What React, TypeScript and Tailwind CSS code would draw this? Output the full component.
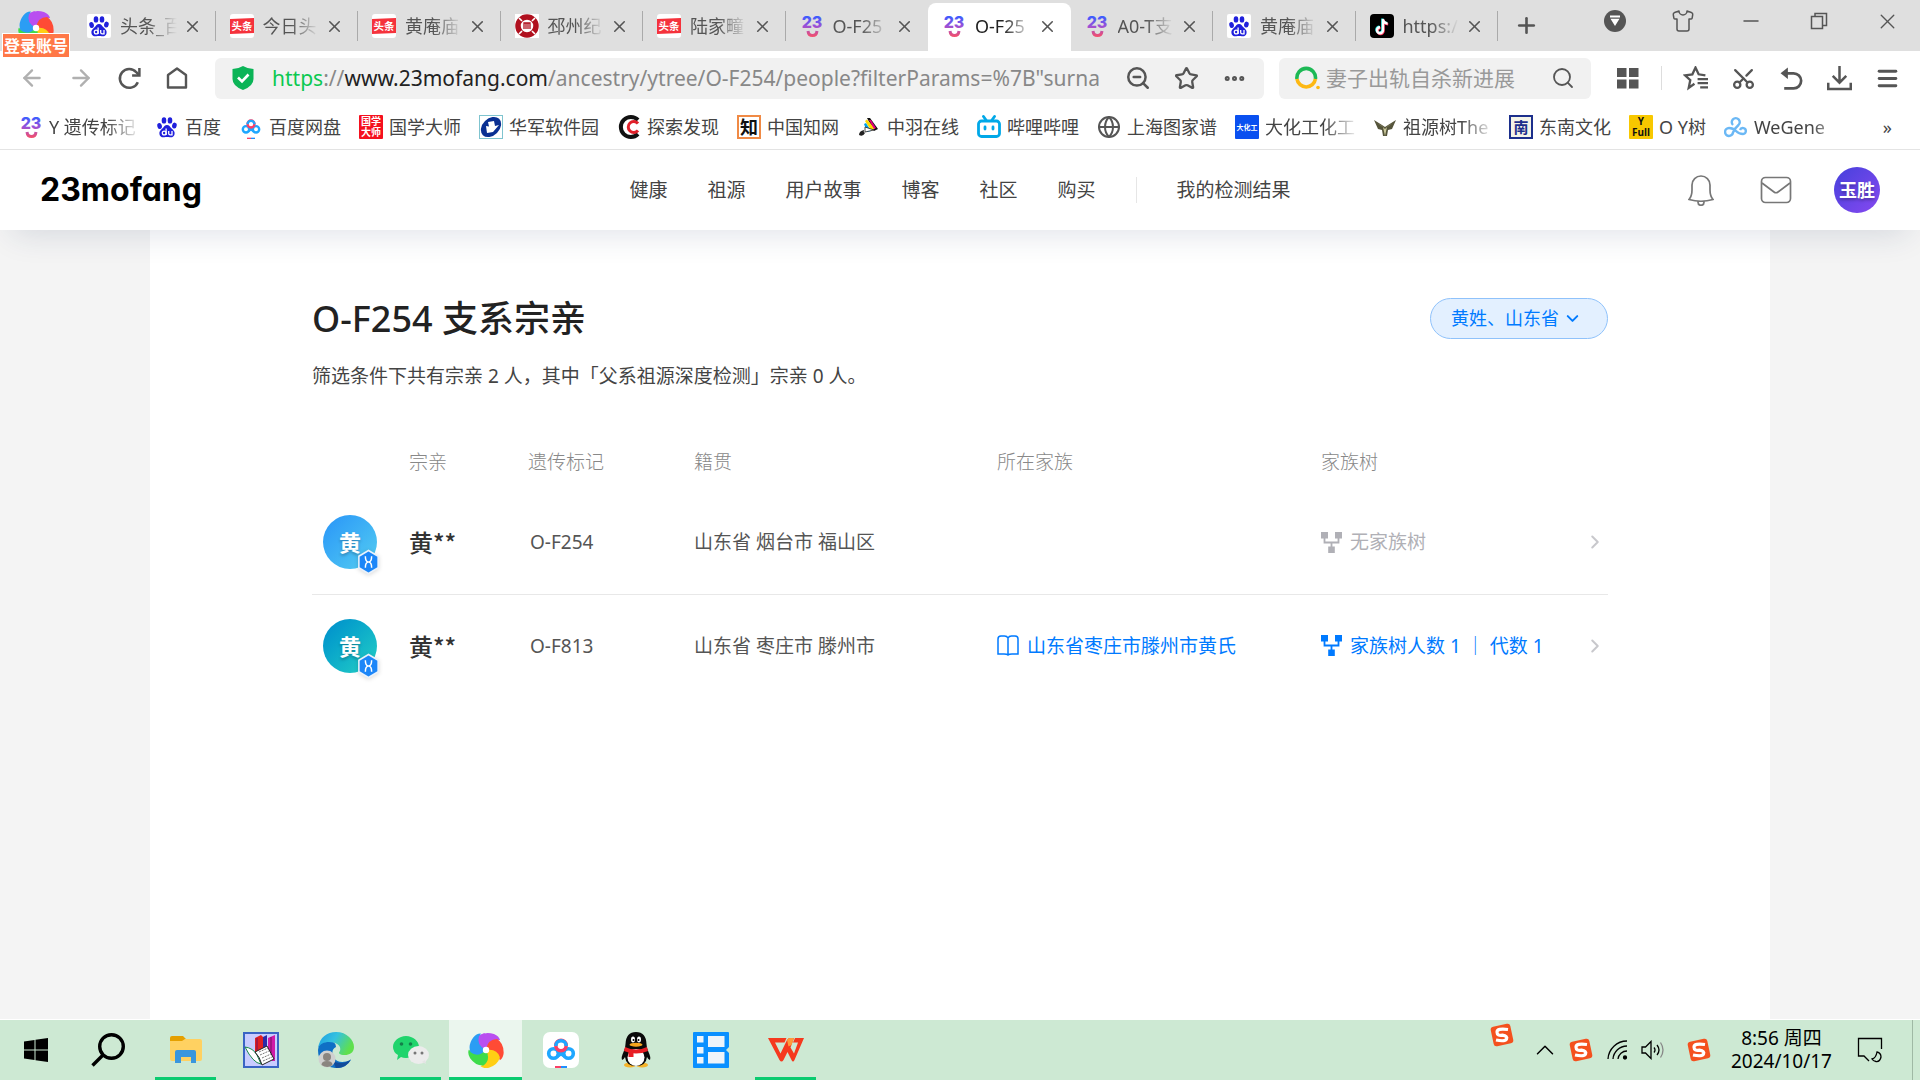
import type { ReactNode } from 'react';
import {
  ArrowLeft, ArrowRight, ChevronDown, ChevronRight, ChevronUp, Ellipsis, Globe, Menu, Minus, Plus,
  Scissors, Search, Shirt, Star, X, ZoomOut,
} from 'lucide-react';

/* ---------- site icons ---------- */

function Paw() {
  return (
    <svg viewBox="0 0 24 24" className="h-6 w-6 shrink-0">
      <rect width="24" height="24" rx="2" fill="#fff" />
      <g fill="#2020dc">
        <ellipse cx="4.6" cy="11" rx="2.3" ry="3" transform="rotate(-12 4.6 11)" />
        <ellipse cx="9" cy="5.4" rx="2.3" ry="3.2" />
        <ellipse cx="15" cy="5.4" rx="2.3" ry="3.2" />
        <ellipse cx="19.4" cy="10.6" rx="2.3" ry="3" transform="rotate(12 19.4 10.6)" />
        <path d="M12 10c2.2 0 3 1.8 4.400 3.300 1.700 1.700 3.600 3 3.200 5.600-.4 2.700-2.500 3.600-4.800 3.300-2-.3-3.600-.3-5.600 0-2.300.3-4.400-.6-4.800-3.300-.4-2.600 1.500-3.900 3.200-5.600C9 11.800 9.800 10 12 10z" />
      </g>
      <g fill="none" stroke="#fff" strokeWidth="1.300">
        <circle cx="9.200" cy="18" r="1.900" />
        <path d="M11.100 13.500V20M13.700 16v2.500q0 1.400 1.500 1.400h1.800V16" />
      </g>
    </svg>
  );
}

function Toutiao() {
  return (
    <svg viewBox="0 0 24 24" className="h-6 w-6 shrink-0">
      <rect width="24" height="24" rx="3" fill="#fff" />
      <path d="M0 5l24-1v15L0 20z" fill="#f5323c" />
      <text x="12" y="16" fontSize="10.500" fontWeight="700" fill="#fff" textAnchor="middle" fontFamily="Noto Sans CJK SC">头条</text>
    </svg>
  );
}

function Mofang() {
  return (
    <svg viewBox="0 0 24 24" className="h-6 w-6 shrink-0">
      <defs>
        <linearGradient id="mofang" x1="0" y1="0" x2="0" y2="24" gradientUnits="userSpaceOnUse">
          <stop offset="0.100" stopColor="#3b5cff" />
          <stop offset="0.500" stopColor="#9a50d8" />
          <stop offset="1" stopColor="#ff4f5e" />
        </linearGradient>
      </defs>
      <text x="12" y="14" fontSize="16" fontWeight="800" fill="url(#mofang)" textAnchor="middle" fontFamily="Inter">23</text>
      <path d="M8 17Q8.500 21.500 12.500 21.500T17 17" fill="none" stroke="url(#mofang)" strokeWidth="3" />
    </svg>
  );
}

function RedSeal() {
  return (
    <svg viewBox="0 0 24 24" className="h-6 w-6 shrink-0">
      <rect width="24" height="24" fill="#fff" />
      <circle cx="12" cy="12" r="9" fill="none" stroke="#b0101e" strokeWidth="5.500" />
      <path d="M4 4l3 3M20 4l-3 3M4 20l3-3M20 20l-3-3" stroke="#fff" strokeWidth="1.600" />
      <path d="M9 15V9h6v6M11 9v6M13 9v6" stroke="#b0101e" strokeWidth="1.300" fill="none" />
    </svg>
  );
}

function Tiktok() {
  return (
    <svg viewBox="0 0 24 24" className="h-6 w-6 shrink-0">
      <rect width="24" height="24" rx="4" fill="#000" />
      <g fill="none" strokeWidth="2.400">
        <path d="M12.400 4.500v11.300a3 3 0 1 1-3-3M12.400 5c.4 2.600 2 3.800 4.600 4" stroke="#25f4ee" />
        <path d="M13.600 5.700V17a3 3 0 1 1-3-3M13.600 6.200c.4 2.600 2 3.800 4.600 4" stroke="#fe2c55" />
        <path d="M13 5v11.300a3 3 0 1 1-3-3M13 5.500c.4 2.600 2 3.800 4.600 4" stroke="#fff" />
      </g>
    </svg>
  );
}

function NetDisk({ size = 'h-6 w-6' }: { size?: string }) {
  return (
    <svg viewBox="0 0 36 36" className={`${size} shrink-0`}>
      <rect width="36" height="36" rx="7" fill="#fff" />
      <g fill="none" strokeWidth="3.600">
        <circle cx="10.500" cy="21.500" r="4.800" stroke="#1ea7ff" />
        <circle cx="25.500" cy="21.500" r="4.800" stroke="#1ea7ff" />
        <path d="M14 24.500L22 18.500M22 24.500L14 18.500" stroke="#1ea7ff" />
        <circle cx="18" cy="13.500" r="5.200" stroke="#fb3f66" />
        <path d="M12.800 14a5.200 5.200 0 0 1 10.400 0" stroke="#1ea7ff" />
      </g>
      <path d="M12 34h6v2h-6z" fill="#fb3f66" />
      <path d="M18 34h6v2h-6z" fill="#1e8fff" />
    </svg>
  );
}

function Tile({ bg, color, stroke, lines, size }: { bg: string; color: string; stroke?: string; lines: string[]; size: number }) {
  return (
    <svg viewBox="0 0 24 24" className="h-6 w-6 shrink-0">
      <rect width="24" height="24" rx={stroke ? 0 : 1} fill={bg} />
      {stroke && <rect x="1" y="1" width="22" height="22" fill="none" stroke={stroke} strokeWidth="2" />}
      {lines.map((line, i) => (
        <text
          key={line}
          x="12"
          y={lines.length === 1 ? 12 + size * 0.38 : 10 + i * 11}
          fontSize={size}
          fontWeight="700"
          fill={color}
          textAnchor="middle"
          fontFamily="Noto Sans, Noto Sans CJK SC"
        >
          {line}
        </text>
      ))}
    </svg>
  );
}

function Huajun() {
  return (
    <svg viewBox="0 0 24 24" className="h-6 w-6 shrink-0">
      <rect x="0.500" y="0.500" width="23" height="23" fill="#fff" stroke="#7fc4cf" />
      <ellipse cx="12" cy="12" rx="11.500" ry="8.500" transform="rotate(-45 12 12)" fill="#0a2f92" />
      <path d="M9 7l6-1 1 5 4-1-6 7-6 1-1-7 3 .5z" fill="#fff" />
    </svg>
  );
}

function Discover() {
  return (
    <svg viewBox="0 0 24 24" className="h-6 w-6 shrink-0">
      <path d="M21 5A10 10 0 1 0 21 19" fill="none" stroke="#111" strokeWidth="4" />
      <path d="M21 8.500A5.500 5.500 0 1 0 21 15.500" fill="none" stroke="#e0202a" strokeWidth="3" />
    </svg>
  );
}

function Feather() {
  return (
    <svg viewBox="0 0 24 24" className="h-6 w-6 shrink-0">
      <path d="M10 3l3 0 8 11-4 2z" fill="#111" />
      <path d="M8 6l2-1.500 8 9-4 2z" fill="#ffd800" />
      <path d="M12 5l2 0 5 8-2 1z" fill="#e6007e" />
      <path d="M7 9l2-1 5 8-4 1z" fill="#00a0e9" />
      <path d="M8 12l9 3-9 2z" fill="#fff" stroke="#222" strokeWidth="0.800" />
      <path d="M2 20q0-4 5-5-1 2 1 3-2 4-6 2z" fill="#222" />
    </svg>
  );
}

function Bilibili() {
  return (
    <svg viewBox="0 0 24 24" className="h-6 w-6 shrink-0" fill="none" stroke="#00a8e8" strokeWidth="2.800" strokeLinecap="round">
      <rect x="1.500" y="6" width="21" height="15.500" rx="3" />
      <path d="M6.500 1.500L9 5M17.500 1.500L15 5M8 12v2M16 12v2" />
    </svg>
  );
}

function Owl() {
  return (
    <svg viewBox="0 0 24 24" className="h-6 w-6 shrink-0">
      <path d="M1 5l8 5 3 2 3-2 8-5-4 9-4 1-1 6h-4l-1-6-4-1z" fill="#55543a" />
      <path d="M4 8l6 4 2 9 2-9 6-4-5 3-3 3-3-3z" fill="#c9c79a" />
    </svg>
  );
}

function WeGene() {
  return (
    <svg viewBox="0 0 24 24" className="h-6 w-6 shrink-0" fill="none" stroke="#6bb8f5" strokeWidth="2.400">
      <path d="M9 10a4 4 0 1 1 5.500 0Q11 13 9 17.500A4 4 0 1 1 5 13q4 0 7 3t7 3a3 3 0 1 0-3-4" />
    </svg>
  );
}

function Pinwheel({ size }: { size: string }) {
  const petals = ['#b94ff0', '#ff4b35', '#ffcf14', '#3ddc4a', '#2b9df4'];
  return (
    <svg viewBox="0 0 36 36" className={`${size} shrink-0`}>
      {petals.map((fill, i) => (
        <path key={fill} d="M18 18Q8 13 11 4Q17 -1 26 2Q31 4 32 8Q21 7 18 18z" fill={fill} transform={`rotate(${i * 72} 18 18)`} />
      ))}
      {/* the first petal has to tuck over the last one again */}
      <path d="M18 18Q8 13 11 4Q13 2 17 1Q12 9 18 18z" fill="#b94ff0" />
      <circle cx="18" cy="18" r="3.200" fill="#fff" />
    </svg>
  );
}

/* ---------- browser chrome ---------- */

const tabs = [
  { icon: <Paw />, title: '头条_百' },
  { icon: <Toutiao />, title: '今日头' },
  { icon: <Toutiao />, title: '黄庵庙' },
  { icon: <RedSeal />, title: '邳州纪' },
  { icon: <Toutiao />, title: '陆家疃' },
  { icon: <Mofang />, title: 'O-F25', noLine: true },
  { icon: <Mofang />, title: 'O-F25', active: true },
  { icon: <Mofang />, title: 'A0-T支' },
  { icon: <Paw />, title: '黄庵庙' },
  { icon: <Tiktok />, title: 'https:/' },
];

const bookmarks: { icon: ReactNode; title: string; fade?: boolean }[] = [
  { icon: <Mofang />, title: 'Y 遗传标记', fade: true },
  { icon: <Paw />, title: '百度' },
  { icon: <NetDisk />, title: '百度网盘' },
  { icon: <Tile bg="#f5101e" color="#fff" lines={['国学', '大师']} size={10} />, title: '国学大师' },
  { icon: <Huajun />, title: '华军软件园' },
  { icon: <Discover />, title: '探索发现' },
  { icon: <Tile bg="#fff" color="#111" stroke="#f08a45" lines={['知']} size={18} />, title: '中国知网' },
  { icon: <Feather />, title: '中羽在线' },
  { icon: <Bilibili />, title: '哔哩哔哩' },
  { icon: <Globe className="h-6 w-6 shrink-0 text-[#555]" strokeWidth={2} />, title: '上海图家谱' },
  { icon: <Tile bg="#0a50f0" color="#fff" lines={['大化工']} size={7} />, title: '大化工化工', fade: true },
  { icon: <Owl />, title: '祖源树The', fade: true },
  { icon: <Tile bg="#f4f4e8" color="#1c2f8c" stroke="#1c2f8c" lines={['南']} size={15} />, title: '东南文化' },
  { icon: <Tile bg="#f8c800" color="#111" lines={['Y', 'Full']} size={10} />, title: 'O Y树' },
  { icon: <WeGene />, title: 'WeGene', fade: true },
];

function TabStrip() {
  return (
    <div className="relative flex h-[51px] shrink-0 bg-[#dfdfdf] text-[#555]">
      <button aria-label="登录账号" className="relative w-[73px] shrink-0">
        <span className="absolute top-[10px] left-[18px]"><Pinwheel size="h-9 w-9" /></span>
        <span className="absolute top-[33px] left-[2px] z-20 flex h-[25px] w-[68px] items-center justify-center border border-white bg-[#ff7847] text-[16px] font-bold text-white">
          登录账号
        </span>
      </button>
      <div className="flex min-w-0 flex-1">
        {tabs.map((tab, i) => (
          <div key={i} className={`relative mt-[3px] flex min-w-0 flex-1 items-center pr-[14px] pb-[2px] pl-[14px] ${tab.active ? 'rounded-t-lg bg-white text-[#222]' : ''}`}>
            {tab.icon}
            <button className="ml-[9px] min-w-0 flex-1 text-left text-[18px] leading-6 whitespace-nowrap [mask-image:linear-gradient(to_right,#000_50%,transparent_100%)]">
              {tab.title}
            </button>
            <button aria-label="关闭标签页" className="ml-[6px] shrink-0"><X size={19} strokeWidth={2} className="text-[#555]" /></button>
            {!tab.active && !tab.noLine && <span className="absolute top-[8px] right-0 h-[30px] w-px bg-[#aaa]" />}
          </div>
        ))}
      </div>
      <div className="flex w-[422px] shrink-0 justify-between pr-[20px] pl-[16px]">
        <button aria-label="新建标签页"><Plus size={25} strokeWidth={2.500} /></button>
        <div className="flex h-[42px] items-center gap-[44px]">
          <button aria-label="缓存">
            <svg width="24" height="24" viewBox="0 0 24 24"><circle cx="12" cy="12" r="11" fill="#555" /><path d="M7 6.500h10v2H7zM7.500 9.800h9L12 17z" fill="#fff" /></svg>
          </button>
          <button aria-label="皮肤"><Shirt size={24} strokeWidth={1.500} /></button>
          <button aria-label="最小化"><Minus size={24} strokeWidth={1.500} /></button>
          <button aria-label="还原" className="px-[3px]">
            <svg width="18" height="18" viewBox="0 0 18 18" fill="none" stroke="#555" strokeWidth="1.500"><path d="M1.500 4.500h11v12h-11zM5 4.500v-3h11.500v12h-4" /></svg>
          </button>
          <button aria-label="关闭"><X size={25} strokeWidth={1.300} /></button>
        </div>
      </div>
    </div>
  );
}

function AddressRow() {
  return (
    <div className="flex h-[54px] shrink-0 items-center bg-white pr-[20px] pl-[19px] text-[#555]">
      <div className="flex gap-[23px]">
        <button aria-label="后退" className="text-[#b0b0b0]"><ArrowLeft size={26} strokeWidth={2.200} /></button>
        <button aria-label="前进" className="text-[#b0b0b0]"><ArrowRight size={26} strokeWidth={2.200} /></button>
        <button aria-label="刷新">
          <svg width="25" height="25" viewBox="0 0 24 24" fill="none" stroke="#555" strokeWidth="2.400"><path d="M20 15.500A9 9 0 1 1 18.500 6L21 8.500" /><path d="M14.500 9H21.500V2" /></svg>
        </button>
        <button aria-label="主页">
          <svg width="24" height="24" viewBox="0 0 24 24" fill="none" stroke="#555" strokeWidth="2.400" strokeLinejoin="round"><path d="M3 9L12 2.500l9 6.500V21.500H3z" /></svg>
        </button>
      </div>
      <div className="ml-[26px] flex h-[41px] min-w-0 flex-1 items-center rounded-md bg-[#f1f1f1] pr-[17px] pl-[16px]">
        <svg width="24" height="24" viewBox="0 0 24 24" className="shrink-0"><path d="M12 0q5 3 10.500 3v10q0 7-10.500 11Q1.500 20 1.500 13V3Q7 3 12 0z" fill="#0bb457" /><path d="M7 11.500l4 4 6.500-7" fill="none" stroke="#fff" strokeWidth="2.600" /></svg>
        <div className="relative ml-[17px] min-w-0 flex-1 overflow-hidden text-[21px] leading-8 whitespace-nowrap text-[#888]">
          <span className="text-[#0bc950]">https</span>://<span className="text-[#222]">www.23mofang.com</span>/ancestry/ytree/O-F254/people?filterParams=%7B"surna
          <input aria-label="地址" className="absolute inset-0 w-full bg-transparent outline-none" />
        </div>
        <div className="ml-[15px] flex shrink-0 gap-[23px]">
          <button aria-label="缩放"><ZoomOut size={26} strokeWidth={2.300} /></button>
          <button aria-label="收藏"><Star size={25} strokeWidth={2.200} /></button>
          <button aria-label="更多"><Ellipsis size={25} strokeWidth={2.800} /></button>
        </div>
      </div>
      <div className="ml-[15px] flex h-[41px] w-[312px] shrink-0 items-center rounded-md bg-[#f1f1f1] pr-[16px] pl-[16px]">
        <svg width="25" height="24" viewBox="0 0 25 24" className="shrink-0" fill="none" strokeWidth="3.600"><path d="M2 13A9.300 9.300 0 1 1 20.400 13" stroke="#1db955" /><path d="M2 13A9.300 9.300 0 0 0 20.400 13" stroke="#fdb813" /><circle cx="23" cy="21.500" r="1.800" fill="#fdb813" stroke="none" /></svg>
        <input aria-label="搜索" placeholder="妻子出轨自杀新进展" className="ml-[6px] min-w-0 flex-1 bg-transparent text-[21px] leading-8 outline-none placeholder:text-[#999]" />
        <button aria-label="搜索" className="ml-2"><Search size={24} strokeWidth={1.800} /></button>
      </div>
      <button aria-label="扩展" className="ml-[25px]">
        <svg width="24" height="24" viewBox="0 0 24 24" fill="#555"><path d="M1 2h9.500v9H1zM13 2h9.500v9H13zM1 13.500h9.500v9H1zM13 13.500h9.500v9H13z" /></svg>
      </button>
      <span className="mx-[21px] h-6 w-px bg-[#ddd]" />
      <div className="flex shrink-0 gap-[23px]">
        <button aria-label="收藏夹">
          <svg width="25" height="25" viewBox="0 0 24 24" fill="none" stroke="#555" strokeWidth="2.200"><path d="M11 17l-5.500 4 1.500-7.500L2 9l7-1 3-6.500L15 8l6.500 1M14 12.500h10M14 16.500h10M16.500 20.500H24" /></svg>
        </button>
        <button aria-label="截图"><Scissors size={25} strokeWidth={2.200} className="-rotate-90" /></button>
        <button aria-label="恢复">
          <svg width="25" height="25" viewBox="0 0 24 24" fill="none" stroke="#555" strokeWidth="2.600"><path d="M4 7h10a7 7 0 0 1 0 14.500H5" /><path d="M8.500 1.500v11L1.500 7z" fill="#555" stroke="none" /></svg>
        </button>
        <button aria-label="下载">
          <svg width="25" height="25" viewBox="0 0 24 24" fill="none" stroke="#555" strokeWidth="2.400"><path d="M12 0v15M5.500 9.500L12 16l6.500-6.500M1.200 16v6h21.600v-6" /></svg>
        </button>
        <button aria-label="菜单"><Menu size={25} strokeWidth={2.800} /></button>
      </div>
    </div>
  );
}

function BookmarkBar() {
  return (
    <div className="flex h-[45px] shrink-0 items-center gap-[18px] border-b border-[#e4e4e4] bg-white pr-[28px] pl-[19px] text-[18px] leading-6 text-[#444]">
      {bookmarks.map(({ icon, title, fade }) => (
        <a key={title} href="#" className="flex shrink-0 items-center gap-[6px]">
          {icon}
          <span className={`whitespace-nowrap ${fade ? 'min-w-[88px] [mask-image:linear-gradient(to_right,#000_65%,transparent_105%)]' : ''}`}>
            {title}
          </span>
        </a>
      ))}
      <button aria-label="更多书签" className="ml-auto">»</button>
    </div>
  );
}

/* ---------- page ---------- */

function SiteHeader() {
  const links = ['健康', '祖源', '用户故事', '博客', '社区', '购买'];
  return (
    <header className="relative z-10 grid h-20 shrink-0 grid-cols-[1fr_auto_1fr] items-center bg-white px-10 shadow-[0_16px_32px_-12px_rgba(30,50,90,0.14)]">
      <a href="#" className="font-['Inter',sans-serif] text-[32px] leading-10 font-bold text-black [font-feature-settings:'cv11']">23mofang</a>
      <nav className="flex items-center gap-10 text-[19px] leading-7 text-[#444]">
        {links.map((link) => <a key={link} href="#">{link}</a>)}
        <span className="h-[26px] w-px bg-[#e6e6e6]" />
        <a href="#">我的检测结果</a>
      </nav>
      <div className="flex items-center justify-end">
        <button aria-label="通知">
          <svg width="26" height="32" viewBox="0 0 26 32" fill="none" stroke="#777" strokeWidth="1.700"><path d="M1 25.500Q4 22 4 16V11a9 9 0 0 1 18 0v5q0 6 3 9.500Q13 29 1 25.500zM10 27.500v.8a3 3 0 0 0 6 0v-.8" /></svg>
        </button>
        <button aria-label="消息" className="ml-[46px]">
          <svg width="32" height="28" viewBox="0 0 32 28" fill="none" stroke="#777" strokeWidth="1.700"><rect x="1.500" y="1.500" width="29" height="25" rx="4" /><path d="M2 7l12 9q2 1.500 4 0L30 7" /></svg>
        </button>
        <button className="ml-[42px] h-[46px] w-[46px] rounded-full bg-linear-135 from-[#4440dc] to-[#8648f0] text-[18px] font-bold whitespace-nowrap text-white [text-shadow:0_2px_3px_rgba(0,0,0,0.3)]">
          玉胜
        </button>
      </div>
    </header>
  );
}

const people = [
  { avatar: 'from-[#2a94f8] to-[#55cdf0]', marker: 'O-F254', origin: '山东省 烟台市 福山区', clan: '', tree: '' },
  { avatar: 'from-[#038ccc] to-[#25d0c4]', marker: 'O-F813', origin: '山东省 枣庄市 滕州市', clan: '山东省枣庄市滕州市黄氏', tree: '家族树人数 1 ｜ 代数 1' },
];

function TreeIcon() {
  return (
    <svg width="21" height="21" viewBox="0 0 21 21" className="shrink-0" fill="currentColor">
      <path d="M0 0h7v6.500H0zM14 0h7v6.500h-7zM7.200 14.500h6.600V21H7.200z" />
      <path d="M3.500 6v4.500h14V6M10.500 10.500V15" fill="none" stroke="currentColor" strokeWidth="1.800" />
    </svg>
  );
}

function Badge() {
  return (
    <svg viewBox="0 0 22 25" className="absolute -right-[3px] -bottom-[6px] h-[26px] w-[23px] drop-shadow-sm">
      <path d="M11 .5l10 6v12l-10 6-10-6v-12z" fill="#eaf2fb" />
      <path d="M11 2.500l8.500 5v10L11 22.500l-8.500-5v-10z" fill="#1c86f8" />
      <path d="M8 7q0 5 2.500 5.500Q8 13 8 18M14 7q0 5-2.500 5.500Q14 13 14 18M10 12.500h2" fill="none" stroke="#fff" strokeWidth="1.400" />
    </svg>
  );
}

function PeoplePage() {
  return (
    <main className="mx-auto w-full max-w-[1620px] flex-1 bg-white px-[162px] pt-[68px]">
      <div className="flex h-[41px] items-center justify-between">
        <h1 className="text-[36px] leading-10 font-medium text-[#222]">O-F254 支系宗亲</h1>
        <button className="flex h-[41px] items-center gap-1 rounded-full border border-[#8fc2fb] bg-[#e3f0ff] pr-[25px] pl-5 text-[18px] text-[#007aff]">
          黄姓、山东省
          <ChevronDown size={19} strokeWidth={2.500} />
        </button>
      </div>
      <p className="mt-[23px] text-[19px] leading-7 text-[#444]">筛选条件下共有宗亲 2 人，其中「父系祖源深度检测」宗亲 0 人。</p>
      <table className="mt-[43px] w-full table-fixed border-collapse text-left text-[19px] leading-7 text-[#555]">
        <colgroup>
          <col className="w-[97px]" />
          <col className="w-[119px]" />
          <col className="w-[166px]" />
          <col className="w-[303px]" />
          <col className="w-[324px]" />
          <col className="w-[259px]" />
          <col className="w-[28px]" />
        </colgroup>
        <thead>
          <tr className="h-[58px] text-[#888]">
            <td />
            {['宗亲', '遗传标记', '籍贯', '所在家族', '家族树'].map((h) => <th key={h} scope="col" className="font-light">{h}</th>)}
            <td />
          </tr>
        </thead>
        <tbody>
          {people.map((p) => (
            <tr key={p.marker} className="h-[103px] border-[#e8e8e8] not-last:border-b">
              <td className="pl-[11px]">
                <div className={`relative flex h-[54px] w-[54px] items-center justify-center rounded-full bg-linear-135 text-[22px] font-bold text-white [text-shadow:0_2px_3px_rgba(0,0,0,0.25)] ${p.avatar}`}>
                  黄
                  <Badge />
                </div>
              </td>
              <td className="font-['Noto_Sans_CJK_SC',sans-serif] text-[24px] font-medium text-[#333]">黄**</td>
              <td className="pl-[2px]">{p.marker}</td>
              <td className="whitespace-nowrap">{p.origin}</td>
              <td>
                {p.clan && (
                  <a href="#" className="flex items-center gap-2 whitespace-nowrap text-[#007aff]">
                    <svg width="22" height="21" viewBox="0 0 22 21" className="shrink-0" fill="none" stroke="currentColor" strokeWidth="1.500"><path d="M11 3Q10 1 7.500 1H4Q1 1 1 4V19h6q3 0 4 1 1-1 4-1h6V4q0-3-3-3h-3.500Q12 1 11 3zM11 3v17" /></svg>
                    {p.clan}
                  </a>
                )}
              </td>
              <td>
                <a href="#" className={`flex items-center gap-2 whitespace-nowrap ${p.tree ? 'text-[#007aff]' : 'text-[#b0b0b6]'}`}>
                  <TreeIcon />
                  {p.tree || '无家族树'}
                </a>
              </td>
              <td><ChevronRight size={22} strokeWidth={2.200} className="ml-[4px] text-[#c8c8cc]" /></td>
            </tr>
          ))}
        </tbody>
      </table>
    </main>
  );
}

/* ---------- taskbar ---------- */

function FolderIcon() {
  return (
    <svg width="32" height="28" viewBox="0 0 32 28">
      <path d="M0 2q0-2 2-2h11l3 3H30v6H0z" fill="#e5a000" />
      <path d="M0 5h12l3-2h15q2 0 2 2v18q0 2-2 2H2q-2 0-2-2z" fill="#ffd161" />
      <path d="M5 27V16q0-2 2-2h17q2 0 2 2v11h-5v-6H11v6z" fill="#3a96dd" />
    </svg>
  );
}

function BooksIcon() {
  return (
    <svg width="36" height="36" viewBox="0 0 36 36">
      <rect x="1" y="1" width="34" height="34" fill="#c9ccff" stroke="#3a64c4" strokeWidth="2" />
      <path d="M12 6l6-3 3 3v15h-9z" fill="#e02020" />
      <path d="M20 5l4-2v16h-4z" fill="#2a2aa8" />
      <path d="M25 6l7-3v26h-3l-4-9z" fill="#d01aa8" />
      <path d="M28 5v22M14 6v12" stroke="#701060" />
      <path d="M2 15q8 1 12 8l4 9q-8-1-16-17z" fill="#fff" stroke="#1a8a4a" />
      <path d="M12 20l12-6 7 13-12 6q-2-8-7-13z" fill="#fff" stroke="#222" />
      <path d="M16 20l9-4M17 23l9-4M19 26l9-4M20 29l9-4" stroke="#777" strokeDasharray="2 1" />
    </svg>
  );
}

function EdgeIcon() {
  return (
    <svg width="36" height="36" viewBox="0 0 36 36">
      <defs>
        <linearGradient id="edgeTop" x1="0" x2="1" y1="0" y2="0.400"><stop stopColor="#1b9de2" /><stop offset="0.500" stopColor="#35c1e0" /><stop offset="1" stopColor="#5fe04c" /></linearGradient>
      </defs>
      <path d="M0 18Q0 10 8 9q10-1 10 6-6 3-2 11 5 7 17 2-6 9-16 8Q0 34 0 18z" fill="#0f6fc5" />
      <path d="M0 16C2 5 9 0 18 0c11 0 18 8 18 15 0 6-5 8-9 8-6 0-7-2-5-4 2-6-5-9-11-9C6 10 2 12 0 16z" fill="url(#edgeTop)" />
      <path d="M12 23q3 9 12 8 6-1 9-4-4 9-15 9z" fill="#114a9a" />
      <circle cx="9" cy="27" r="8.500" fill="#d0d0d0" />
      <circle cx="9" cy="25" r="4" fill="#8a8580" />
      <path d="M3.500 33q0-4 5.500-4t5.500 4q-5 4-11 0z" fill="#8a8580" />
    </svg>
  );
}

function WechatIcon() {
  return (
    <svg width="36" height="30" viewBox="0 0 36 30">
      <path d="M13 1c7 0 13 5 13 11s-6 11-13 11q-3 0-5-1l-4 3 1-5Q0 17 0 12C0 6 6 1 13 1z" fill="#20d46c" />
      <ellipse cx="25.500" cy="20" rx="10.500" ry="9" fill="#ececec" />
      <path d="M29 27l4 2-1-4z" fill="#e4e4e4" />
      <g fill="#14804a"><circle cx="8.500" cy="9" r="1.800" /><circle cx="17.500" cy="9" r="1.800" /></g>
      <g fill="#777"><circle cx="22" cy="18" r="1.500" /><circle cx="29" cy="18" r="1.500" /></g>
    </svg>
  );
}

function QQIcon() {
  return (
    <svg width="30" height="36" viewBox="0 0 30 36">
      <ellipse cx="9" cy="33" rx="6" ry="2.500" fill="#f5b32a" /><ellipse cx="21" cy="33" rx="6" ry="2.500" fill="#f5b32a" />
      <path d="M15 0q10 0 10.500 12 0 4 2 8 2.500 5 1.500 8-1.500 0-3-3-1 9-11 9T4 25q-1.500 3-3 3-1-3 1.500-8 2-4 2-8Q5 0 15 0z" fill="#0a0a0a" />
      <ellipse cx="15" cy="25.500" rx="8.500" ry="8.500" fill="#fff" />
      <path d="M4 15q11 5 22 0l1 4q-12 5-24 0z" fill="#e81e24" /><path d="M7.500 19h5v6h-5z" fill="#e81e24" />
      <ellipse cx="12" cy="7.500" rx="2" ry="3" fill="#fff" /><ellipse cx="18" cy="7.500" rx="2" ry="3" fill="#fff" />
      <circle cx="12.500" cy="8" r="1" /><circle cx="17.500" cy="8" r="1" />
      <ellipse cx="15" cy="12.700" rx="6.500" ry="2" fill="#f5a51e" />
    </svg>
  );
}

function PanelIcon() {
  return (
    <svg width="36" height="36" viewBox="0 0 36 36">
      <rect width="36" height="36" rx="1" fill="#0a90ff" />
      <path d="M4 4h6.500v6.500H4zM4 15h6.500v6.500H4zM4 25h6.500v6.500H4zM15 4h16.500v11H15zM15 20h16.500v11.500H15z" fill="#eef4fa" />
      <path d="M36 15v6l-3-3z" fill="#cfe9d5" />
    </svg>
  );
}

function WpsIcon() {
  return (
    <svg width="36" height="24" viewBox="0 0 36 24">
      <path d="M0 0h18.500l-2 4.500H7l5.500 11L19 2q1-2 3-2h4l-3.500 9.500 3.500 6L30 4.500h-5L27 0h9L26.500 22q-1.500 3-3 0L19.500 14 15.500 22q-2 3-4 0z" fill="#f5391e" />
      <path d="M19 2q1-2 3-2h4l-2.500 7-3 1.500z" fill="#ff9a3c" />
    </svg>
  );
}

const apps = [
  { name: '文件资源管理器', icon: <FolderIcon />, state: 'open' },
  { name: '电子书', icon: <BooksIcon />, state: '' },
  { name: 'Edge', icon: <EdgeIcon />, state: '' },
  { name: '微信', icon: <WechatIcon />, state: 'open' },
  { name: '浏览器', icon: <Pinwheel size="h-9 w-9" />, state: 'active' },
  { name: '网盘', icon: <NetDisk size="h-9 w-9" />, state: '' },
  { name: 'QQ', icon: <QQIcon />, state: '' },
  { name: '面板', icon: <PanelIcon />, state: '' },
  { name: 'WPS', icon: <WpsIcon />, state: 'open' },
];

function Sogou() {
  return (
    <svg width="24" height="24" viewBox="0 0 24 24">
      <rect x="2" y="2" width="20" height="20" rx="3" fill="#f4511e" transform="rotate(-12 12 12)" />
      <path d="M18 6.500Q7 5 7 9t5.500 3.200Q18 13 16.500 16T6 17" fill="none" stroke="#fff" strokeWidth="3.200" />
    </svg>
  );
}

function Taskbar() {
  return (
    <footer className="flex h-[61px] shrink-0 items-center border-t border-white bg-[#cde9d3] text-black">
      <button aria-label="开始" className="flex h-full w-[72px] items-center justify-center">
        <svg width="24" height="24" viewBox="0 0 24 24"><path d="M0 3.500l10.500-1.500v9.500H0zM11.500 1.800L24 0v11.500H11.500zM0 12.500h10.500V22L0 20.500zM11.500 12.500H24V24l-12.500-1.800z" /></svg>
      </button>
      <button aria-label="搜索" className="flex h-full w-[72px] items-center justify-center">
        <svg width="34" height="34" viewBox="0 0 34 34" fill="none" stroke="#000" strokeWidth="3.400"><circle cx="20.500" cy="13.500" r="11.800" /><path d="M12 22L1.500 32.500" /></svg>
      </button>
      <div className="ml-[4px] flex h-full">
        {apps.map((app) => (
          <button key={app.name} aria-label={app.name} className={`relative mx-px flex w-[73px] items-center justify-center ${app.state === 'active' ? 'bg-[#ebf6ee]' : ''}`}>
            {app.icon}
            {app.state && <span className={`absolute bottom-0 h-[3px] bg-[#0bcb70] ${app.state === 'active' ? 'inset-x-0' : 'inset-x-[6px]'}`} />}
          </button>
        ))}
      </div>
      <div className="ml-auto flex h-full items-center">
        <span className="mr-[16px] self-start pt-[3px]"><Sogou /></span>
        <button aria-label="显示隐藏的图标"><ChevronUp size={30} strokeWidth={1.200} /></button>
        <span className="ml-[9px]"><Sogou /></span>
        <svg width="22" height="22" viewBox="0 0 22 22" className="ml-[14px]" fill="none" stroke="#000" strokeWidth="1.300"><path d="M1 20A19 19 0 0 1 20 2M6 20A14 14 0 0 1 20 7M11 20A9 9 0 0 1 20 12" /><circle cx="18" cy="18.500" r="1.500" fill="#000" /></svg>
        <svg width="24" height="20" viewBox="0 0 24 20" className="ml-[12px]" fill="none" stroke="#000" strokeWidth="1.300"><path d="M1 7h3.500L10 1.500v17L4.500 13H1zM13 7.500q2 2.500 0 5M16 5q4 5 0 10" /><path d="M19.500 2.500q5 7.500 0 15" stroke="#888" /></svg>
        <span className="ml-[22px]"><Sogou /></span>
        <time className="ml-[20px] text-center text-[19px] leading-[23px]">8:56 周四<br />2024/10/17</time>
        <svg width="26" height="26" viewBox="0 0 26 26" className="ml-[25px]" fill="none" stroke="#000" strokeWidth="1.300"><path d="M24.500 12V1.500H1.500V19H7l5 5M15 22q4-1 5-7 4 1 4 5-1 5-5 4.500-3-.5-4-2.500z" /></svg>
        <span className="ml-[29px] h-full w-px bg-[#9fb9a5]" />
        <span className="w-[7px]" />
      </div>
    </footer>
  );
}

export default function App() {
  return (
    <div className="flex h-screen flex-col overflow-hidden bg-[#f4f4f4] font-['Noto_Sans','Noto_Sans_CJK_SC',sans-serif]">
      <TabStrip />
      <AddressRow />
      <BookmarkBar />
      <SiteHeader />
      <PeoplePage />
      <Taskbar />
    </div>
  );
}
